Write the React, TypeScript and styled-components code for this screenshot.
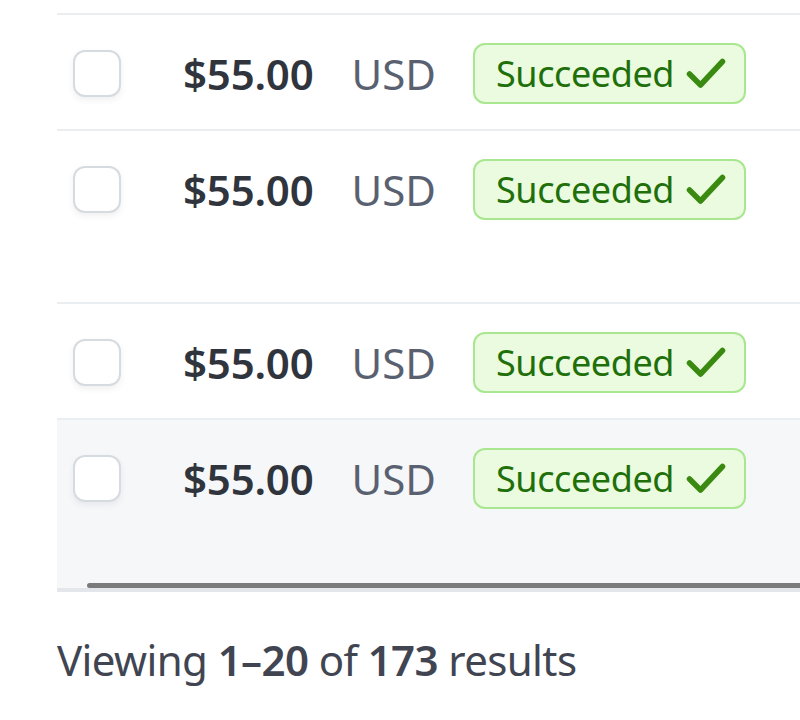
import React from "react";
import styled, { createGlobalStyle } from "styled-components";

const Global = createGlobalStyle`
  html, body { margin: 0; padding: 0; background: #ffffff; }
  body { font-family: "Noto Sans", "Open Sans", sans-serif; -webkit-font-smoothing: antialiased; }
`;

const Page = styled.div`
  width: 800px;
  height: 720px;
  overflow: hidden;
  padding: 13px 0 0 57px;
  box-sizing: border-box;
`;

const Table = styled.div`
  display: flex;
  flex-direction: column;
  width: 900px;
`;

const Row = styled.div<{ $height: number; $hover?: boolean }>`
  display: flex;
  align-items: flex-start;
  box-sizing: border-box;
  height: ${(p) => p.$height}px;
  padding: 28px 0 0 16px;
  border-top: 2px solid #ebeef1;
  background: ${(p) => (p.$hover ? "#f6f7f9" : "#ffffff")};
`;

const Checkbox = styled.div`
  flex: none;
  width: 44px;
  height: 43px;
  margin-top: 7px;
  border: 2px solid #d6dbe0;
  border-radius: 12px;
  background: #ffffff;
  box-shadow: 0 3px 6px rgba(60, 66, 87, 0.08);
`;

const Amount = styled.span`
  margin-left: 62px;
  font-size: 42px;
  line-height: 61px;
  font-weight: 600;
  letter-spacing: -0.2px;
  color: #30343d;
`;

const Currency = styled.span`
  margin-left: 38px;
  font-size: 42px;
  line-height: 61px;
  color: #596171;
`;

const Badge = styled.div`
  margin-left: 37px;
  display: flex;
  align-items: center;
  gap: 12px;
  box-sizing: border-box;
  height: 61px;
  padding: 0 18px 0 21px;
  border: 2px solid #a9e690;
  border-radius: 12px;
  background: #eafbdf;
  color: #1f6f0a;
  font-size: 36px;
  letter-spacing: -0.4px;
`;

const ScrollArea = styled.div`
  background: #f6f7f9;
  padding: 0 0 0 30px;
  border-bottom: 4px solid #e3e6ea;
`;

const Thumb = styled.div`
  height: 5px;
  border-radius: 3px 0 0 3px;
  background: #7b7b7b;
`;

const Footer = styled.div`
  margin-top: 40px;
  font-size: 42px;
  line-height: 56px;
  letter-spacing: -0.6px;
  color: #414552;
  b { font-weight: 600; }
`;

const Check = () => (
  <svg width="40" height="31" viewBox="0 0 40 31" fill="none">
    <path d="M3.5 16 L14.5 27 L36.5 3.5" stroke="#3a8a12" strokeWidth="5.5" strokeLinecap="round" strokeLinejoin="round" />
  </svg>
);

const rows = [
  { h: 116, hover: false },
  { h: 173, hover: false },
  { h: 116, hover: false },
  { h: 165, hover: true },
];

export default function App() {
  return (
    <>
      <Global />
      <Page>
        <Table>
          {rows.map((r, i) => (
            <Row key={i} $height={r.h} $hover={r.hover}>
              <Checkbox />
              <Amount>$55.00</Amount>
              <Currency>USD</Currency>
              <Badge>
                Succeeded
                <Check />
              </Badge>
            </Row>
          ))}
          <ScrollArea>
            <Thumb />
          </ScrollArea>
        </Table>
        <Footer>
          Viewing <b>1–20</b> of <b>173</b> results
        </Footer>
      </Page>
    </>
  );
}
